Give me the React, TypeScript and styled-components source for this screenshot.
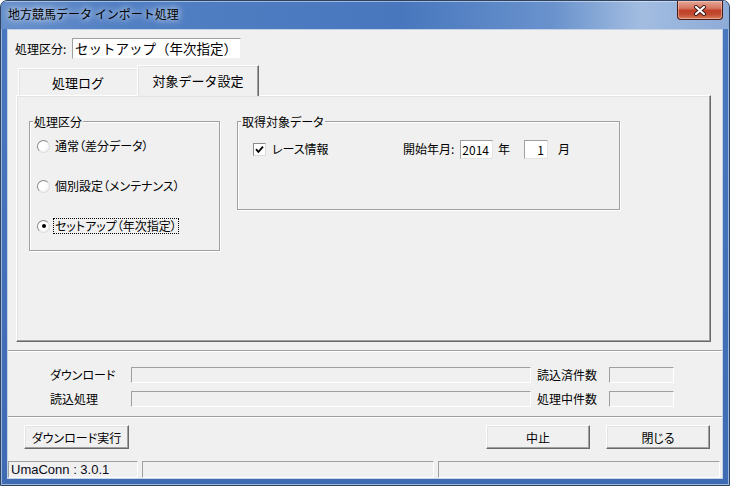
import React from "react";
import styled, { createGlobalStyle } from "styled-components";

const GlobalStyle = createGlobalStyle`
  html, body { margin: 0; padding: 0; background: #ffffff; }
  body { font-family: "Noto Sans CJK JP", sans-serif; }
`;

const UI_FONT = `"Noto Sans CJK JP", "Liberation Sans", sans-serif`;

const Window = styled.div`
  width: 730px;
  height: 486px;
  box-sizing: border-box;
  border: 1px solid #2f4460;
  border-radius: 7px 7px 0 0;
  overflow: hidden;
  display: flex;
  flex-direction: column;
  background: linear-gradient(180deg, #4a78be, #3e6bb2);
`;

const TitleBar = styled.div`
  height: 28px;
  flex: none;
  display: flex;
  align-items: flex-start;
  padding: 0 6px 0 7px;
  background: linear-gradient(
    90deg,
    #6790cb 0%,
    #5280c4 16%,
    #4877be 55%,
    #6a93cd 76%,
    #a3bde1 88%,
    #8dabd7 100%
  );
  box-shadow: inset 0 1px 0 rgba(255, 255, 255, 0.45);
`;

const TitleText = styled.div`
  margin-top: 5px;
  font-family: ${UI_FONT};
  font-size: 12px;
  line-height: 16px;
  color: #000;
  text-shadow: 0 0 6px rgba(255, 255, 255, 0.9), 0 0 10px rgba(255, 255, 255, 0.6);
`;

const CloseButton = styled.div`
  margin-left: auto;
  width: 46px;
  height: 19px;
  box-sizing: border-box;
  border: 1px solid #4a1d14;
  border-top: none;
  border-radius: 0 0 4px 4px;
  display: flex;
  align-items: center;
  justify-content: center;
  background: linear-gradient(
    180deg,
    #e4a695 0%,
    #d57762 40%,
    #c2402a 52%,
    #c24a30 75%,
    #d9805f 100%
  );
  box-shadow: inset 0 0 0 1px rgba(255, 220, 210, 0.45);
`;

const FrameBody = styled.div`
  flex: 1;
  display: flex;
  padding: 0 6px 6px 6px;
  box-shadow: inset 1px 0 0 #9db7dc, inset -1px 0 0 #9db7dc, inset 0 -1px 0 #9db7dc;
`;

const Client = styled.div`
  flex: 1;
  border: 1px solid #c3d2e6;
  background: #f0f0f0;
  display: flex;
  flex-direction: column;
  font-family: ${UI_FONT};
  font-size: 12px;
  font-feature-settings: "palt";
  color: #000;
`;

const TopRow = styled.div`
  margin-top: 8px;
  padding-left: 7px;
  height: 21px;
  display: flex;
  align-items: center;
`;

const FieldLabel = styled.span<{ $w: number; $ml?: number }>`
  width: ${(p) => p.$w}px;
  margin-left: ${(p) => p.$ml ?? 0}px;
  flex: none;
  line-height: 14px;
  white-space: nowrap;
`;

const KubunBox = styled.div`
  width: 169px;
  height: 21px;
  box-sizing: border-box;
  background: #fff;
  border: 1px solid;
  border-color: #a0a0a0 #f0f0f0 #f0f0f0 #a0a0a0;
  padding-left: 2px;
  font-size: 13.5px;
  line-height: 19px;
  font-feature-settings: normal;
  white-space: nowrap;
`;

const TabStrip = styled.div`
  margin-top: 6px;
  padding-left: 10px;
  height: 30px;
  display: flex;
  align-items: flex-end;
`;

const Tab = styled.div<{ $active?: boolean; $w: number }>`
  width: ${(p) => p.$w}px;
  height: ${(p) => (p.$active ? 31 : 27)}px;
  margin-bottom: ${(p) => (p.$active ? -1 : 0)}px;
  position: relative;
  z-index: ${(p) => (p.$active ? 1 : 0)};
  box-sizing: border-box;
  background: #f0f0f0;
  border-top: 1px solid #fff;
  border-left: 1px solid #fff;
  border-right: ${(p) => (p.$active ? "1px solid #696969" : "none")};
  box-shadow: ${(p) =>
    p.$active ? "inset -1px 0 0 #a0a0a0, inset 1px 1px 0 #e3e3e3" : "inset 1px 1px 0 #e3e3e3"};
  display: flex;
  align-items: center;
  justify-content: center;
  padding-bottom: ${(p) => (p.$active ? 2 : 0)}px;
  font-size: 13px;
  font-feature-settings: normal;
  white-space: nowrap;
`;

const Panel = styled.div`
  margin-left: 8px;
  width: 695px;
  height: 247px;
  flex: none;
  box-sizing: border-box;
  border: 1px solid;
  border-color: #fff #696969 #696969 #fff;
  box-shadow: inset -1px -1px 0 #a0a0a0, inset 1px 1px 0 #e3e3e3;
  display: flex;
  align-items: flex-start;
  padding: 25px 0 0 12px;
`;

const GroupBox = styled.div<{ $w: number; $h: number; $gap?: number }>`
  position: relative;
  width: ${(p) => p.$w}px;
  height: ${(p) => p.$h}px;
  margin-left: ${(p) => p.$gap ?? 0}px;
  flex: none;
  box-sizing: border-box;
  border: 1px solid #a0a0a0;
  box-shadow: 1px 1px 0 #fff, inset 1px 1px 0 #fff;
`;

const Legend = styled.span`
  position: absolute;
  top: -8px;
  left: 3px;
  padding: 0 1px;
  background: #f0f0f0;
  line-height: 15px;
  white-space: nowrap;
`;

const RadioList = styled.div`
  display: flex;
  flex-direction: column;
  gap: 24px;
  padding: 16px 0 0 7px;
`;

const OptionRow = styled.div`
  height: 16px;
  display: flex;
  align-items: center;
`;

const RadioDot = styled.span<{ $checked?: boolean }>`
  width: 13px;
  height: 13px;
  flex: none;
  box-sizing: border-box;
  border-radius: 50%;
  border: 1px solid;
  border-color: #8a8a8a #dcdcdc #dcdcdc #8a8a8a;
  background: radial-gradient(circle at 40% 40%, #ffffff 40%, #e6e6e6 100%);
  margin-right: 3px;
  display: flex;
  align-items: center;
  justify-content: center;
  &::after {
    content: "";
    width: 4px;
    height: 4px;
    border-radius: 50%;
    background: ${(p) => (p.$checked ? "#000" : "transparent")};
  }
`;

const OptionLabel = styled.span<{ $focus?: boolean }>`
  border: 1px dotted ${(p) => (p.$focus ? "#000" : "transparent")};
  padding: 0 1px;
  line-height: 14px;
  white-space: nowrap;
`;

const DataRow = styled.div`
  display: flex;
  align-items: center;
  height: 20px;
  padding: 17px 0 0 15px;
`;

const CheckField = styled.div`
  width: 150px;
  flex: none;
  display: flex;
  align-items: center;
`;

const CheckBox = styled.span`
  width: 13px;
  height: 13px;
  flex: none;
  box-sizing: border-box;
  background: #fff;
  border: 1px solid;
  border-color: #8a8a8a #dcdcdc #dcdcdc #8a8a8a;
  margin-right: 4px;
  display: flex;
  align-items: center;
  justify-content: center;
`;

const SmallInput = styled.div<{ $w: number }>`
  width: ${(p) => p.$w}px;
  height: 19px;
  flex: none;
  box-sizing: border-box;
  background: #fff;
  border: 1px solid;
  border-color: #a0a0a0 #e3e3e3 #e3e3e3 #a0a0a0;
  padding-right: 3px;
  text-align: right;
  line-height: 17px;
  font-size: 12px;
`;

const UnitLabel = styled.span<{ $l: number; $r?: number }>`
  margin-left: ${(p) => p.$l}px;
  margin-right: ${(p) => p.$r ?? 0}px;
  line-height: 14px;
`;

const Separator = styled.div<{ $top: number }>`
  margin-top: ${(p) => p.$top}px;
  height: 0;
  border-top: 1px solid #a0a0a0;
  border-bottom: 1px solid #fff;
`;

const ProgressRows = styled.div`
  padding-top: 15px;
  display: flex;
  flex-direction: column;
  gap: 8px;
`;

const ProgressRow = styled.div`
  height: 16px;
  display: flex;
  align-items: center;
  padding-left: 42px;
`;

const SunkenBox = styled.div<{ $w: number }>`
  width: ${(p) => p.$w}px;
  height: 16px;
  flex: none;
  box-sizing: border-box;
  border: 1px solid;
  border-color: #a0a0a0 #fff #fff #a0a0a0;
`;

const ButtonRow = styled.div`
  margin-top: 7px;
  height: 24px;
  display: flex;
  padding: 0 12px 0 16px;
`;

const PushButton = styled.div<{ $w: number; $gap?: number; $push?: boolean }>`
  width: ${(p) => p.$w}px;
  height: 24px;
  margin-left: ${(p) => (p.$push ? "auto" : `${p.$gap ?? 0}px`)};
  flex: none;
  box-sizing: border-box;
  background: #f0f0f0;
  border: 1px solid;
  border-color: #fff #696969 #696969 #fff;
  box-shadow: inset -1px -1px 0 #a0a0a0, inset 1px 1px 0 #e3e3e3;
  display: flex;
  align-items: center;
  justify-content: center;
  white-space: nowrap;
`;

const StatusBar = styled.div`
  margin-top: auto;
  height: 19px;
  display: flex;
  gap: 4px;
  padding: 2px 2px 0 0;
  box-sizing: border-box;
`;

const StatusPanel = styled.div<{ $w?: number }>`
  width: ${(p) => (p.$w ? `${p.$w}px` : "auto")};
  flex: ${(p) => (p.$w ? "none" : "1")};
  height: 17px;
  box-sizing: border-box;
  border: 1px solid;
  border-color: #a0a0a0 #fff #fff #a0a0a0;
  padding-left: 2px;
  font-family: "Liberation Sans", Arial, sans-serif;
  font-size: 13px;
  line-height: 15px;
  color: #0a0a20;
  white-space: nowrap;
`;

const CloseGlyph = () => (
  <svg width="14" height="11" viewBox="0 0 14 11">
    <path d="M3 2 L11 9 M11 2 L3 9" stroke="#3a1712" strokeWidth="4" strokeLinecap="round" />
    <path d="M3 2 L11 9 M11 2 L3 9" stroke="#ffffff" strokeWidth="2.2" strokeLinecap="round" />
  </svg>
);

const CheckMark = () => (
  <svg width="9" height="9" viewBox="0 0 9 9">
    <path d="M1 4.2 L3.4 6.8 L8 1.6" fill="none" stroke="#000" strokeWidth="1.8" />
  </svg>
);

const modes = [
  { label: "通常（差分データ）", checked: false },
  { label: "個別設定（メンテナンス）", checked: false },
  { label: "セットアップ（年次指定）", checked: true },
];

const counters = [
  { label: "ダウンロード", count: "読込済件数" },
  { label: "読込処理", count: "処理中件数" },
];

export default function App() {
  return (
    <>
      <GlobalStyle />
      <Window>
        <TitleBar>
          <TitleText>地方競馬データ インポート処理</TitleText>
          <CloseButton>
            <CloseGlyph />
          </CloseButton>
        </TitleBar>
        <FrameBody>
          <Client>
            <TopRow>
              <FieldLabel $w={57}>処理区分:</FieldLabel>
              <KubunBox>セットアップ（年次指定）</KubunBox>
            </TopRow>

            <TabStrip>
              <Tab $w={119}>処理ログ</Tab>
              <Tab $w={122} $active>
                対象データ設定
              </Tab>
            </TabStrip>

            <Panel>
              <GroupBox $w={191} $h={130}>
                <Legend>処理区分</Legend>
                <RadioList>
                  {modes.map((m) => (
                    <OptionRow key={m.label}>
                      <RadioDot $checked={m.checked} />
                      <OptionLabel $focus={m.checked}>{m.label}</OptionLabel>
                    </OptionRow>
                  ))}
                </RadioList>
              </GroupBox>

              <GroupBox $w={383} $h={89} $gap={17}>
                <Legend>取得対象データ</Legend>
                <DataRow>
                  <CheckField>
                    <CheckBox>
                      <CheckMark />
                    </CheckBox>
                    <OptionLabel>レース情報</OptionLabel>
                  </CheckField>
                  <FieldLabel $w={57}>開始年月:</FieldLabel>
                  <SmallInput $w={33}>2014</SmallInput>
                  <UnitLabel $l={5} $r={14}>年</UnitLabel>
                  <SmallInput $w={24}>1</SmallInput>
                  <UnitLabel $l={10}>月</UnitLabel>
                </DataRow>
              </GroupBox>
            </Panel>

            <Separator $top={8} />

            <ProgressRows>
              {counters.map((c) => (
                <ProgressRow key={c.label}>
                  <FieldLabel $w={81}>{c.label}</FieldLabel>
                  <SunkenBox $w={400} />
                  <FieldLabel $w={72} $ml={6}>
                    {c.count}
                  </FieldLabel>
                  <SunkenBox $w={65} />
                </ProgressRow>
              ))}
            </ProgressRows>

            <Separator $top={9} />

            <ButtonRow>
              <PushButton $w={105}>ダウンロード実行</PushButton>
              <PushButton $w={104} $push>
                中止
              </PushButton>
              <PushButton $w={104} $gap={16}>
                閉じる
              </PushButton>
            </ButtonRow>

            <StatusBar>
              <StatusPanel $w={130}>UmaConn : 3.0.1</StatusPanel>
              <StatusPanel $w={292} />
              <StatusPanel />
            </StatusBar>
          </Client>
        </FrameBody>
      </Window>
    </>
  );
}
